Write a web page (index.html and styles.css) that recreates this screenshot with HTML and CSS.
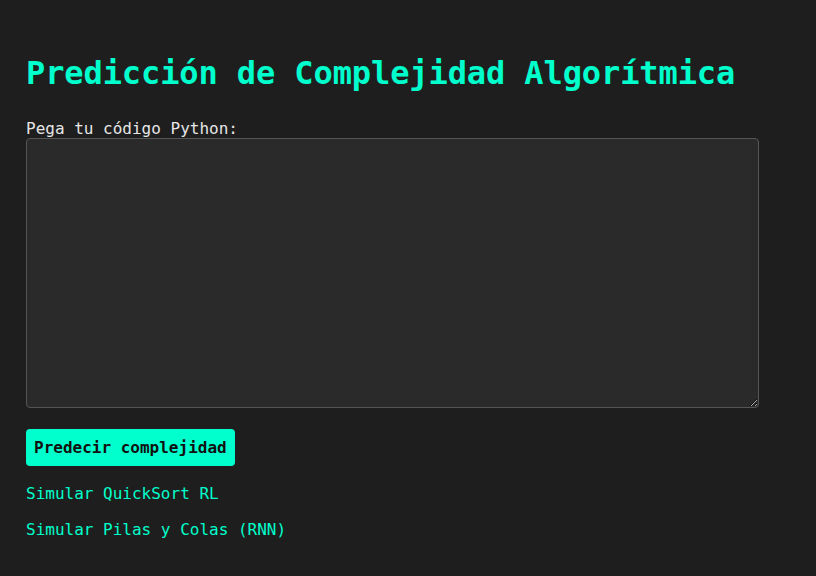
FILE: index.html
```html
<!DOCTYPE html>
<html lang="es">
<head>
<meta charset="utf-8">
<title>Predicción de Complejidad Algorítmica</title>
<link rel="stylesheet" href="styles.css">
</head>
<body>
<main class="page">
  <h1 class="title">Predicción de Complejidad Algorítmica</h1>
  <label class="label" for="code">Pega tu código Python:</label>
  <textarea id="code" class="code"></textarea>
  <button class="btn" type="button">Predecir complejidad</button>
  <a class="link" href="#">Simular QuickSort RL</a>
  <a class="link" href="#">Simular Pilas y Colas (RNN)</a>
</main>
</body>
</html>
```
FILE: styles.css
```css
html, body {
  margin: 0;
  padding: 0;
  background: #1e1e1e;
}
body {
  font-family: "DejaVu Sans Mono", "Liberation Mono", monospace;
  color: #e6e6e6;
}
.page {
  display: flex;
  flex-direction: column;
  align-items: flex-start;
  padding: 53px 26px 0 26px;
}
.title {
  margin: 0;
  font-size: 32px;
  line-height: 40px;
  font-weight: bold;
  color: #00ffcc;
  letter-spacing: -0.1px;
}
.label {
  margin-top: 26px;
  font-size: 16px;
  line-height: 19px;
}
.code {
  box-sizing: border-box;
  width: 733px;
  height: 270px;
  margin: 0;
  background: #2a2a2a;
  border: 1px solid #555;
  border-radius: 4px;
  color: #e6e6e6;
  font-family: inherit;
  resize: vertical;
}
.btn {
  margin-top: 21px;
  height: 37px;
  padding: 0 8px;
  background: #00ffcc;
  color: #111;
  border: none;
  border-radius: 4px;
  font-family: inherit;
  font-size: 16px;
  font-weight: bold;
}
.link {
  margin-top: 17px;
  font-size: 16px;
  line-height: 19px;
  color: #00ffcc;
  text-decoration: none;
}
.btn + .link {
  margin-top: 18px;
}
```
